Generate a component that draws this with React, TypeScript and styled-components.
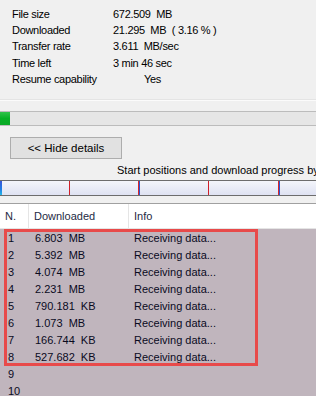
import styled, { createGlobalStyle } from "styled-components";

const GlobalStyle = createGlobalStyle`
  html, body {
    margin: 0;
    padding: 0;
    background: #f0f0f0;
    overflow: hidden;
  }
  body {
    font-family: "Liberation Sans", Arial, sans-serif;
    color: #000;
  }
  *, *::before, *::after {
    box-sizing: border-box;
  }
`;

const info = [
  { label: "File size", value: "672.509  MB" },
  { label: "Downloaded", value: "21.295  MB  ( 3.16 % )" },
  { label: "Transfer rate", value: "3.611  MB/sec" },
  { label: "Time left", value: "3 min 46 sec" },
  { label: "Resume capability", value: "Yes", indent: true },
];

const sections = [
  { n: 1, size: "6.803  MB" },
  { n: 2, size: "5.392  MB" },
  { n: 3, size: "4.074  MB" },
  { n: 4, size: "2.231  MB" },
  { n: 5, size: "790.181  KB" },
  { n: 6, size: "1.073  MB" },
  { n: 7, size: "166.744  KB" },
  { n: 8, size: "527.682  KB" },
];

const markers = [
  { x: 69, blue: false },
  { x: 138, blue: true },
  { x: 208, blue: false },
  { x: 278, blue: true },
];

export default function App() {
  return (
    <Window>
      <GlobalStyle />
      <InfoTable>
        {info.map((r) => (
          <InfoRow key={r.label}>
            <Label>{r.label}</Label>
            <Value $indent={r.indent}>{r.value}</Value>
          </InfoRow>
        ))}
      </InfoTable>
      <Divider />
      <Progress>
        <ProgressFill style={{ width: "3.16%" }} />
      </Progress>
      <Button>&lt;&lt; Hide details</Button>
      <Caption>Start positions and download progress by sections</Caption>
      <SectionBar>
        <StartMark />
        {markers.map((m) => (
          <Marker key={m.x} $blue={m.blue} style={{ left: m.x }} />
        ))}
      </SectionBar>
      <List>
        <Header>
          <HeadCell $w={29}>N.</HeadCell>
          <HeadCell $w={100}>Downloaded</HeadCell>
          <HeadCell $w={190} $last>
            Info
          </HeadCell>
        </Header>
        <Body>
          {sections.map((s) => (
            <Row key={s.n}>
              <NumCell>{s.n}</NumCell>
              <SizeCell>{s.size}</SizeCell>
              <InfoCell>Receiving data...</InfoCell>
            </Row>
          ))}
          <Row>
            <NumCell>9</NumCell>
          </Row>
          <Row>
            <NumCell>10</NumCell>
          </Row>
          <Highlight />
        </Body>
      </List>
    </Window>
  );
}

const Window = styled.div`
  width: 316px;
  height: 396px;
  display: flex;
  flex-direction: column;
  overflow: hidden;
`;

const InfoTable = styled.div`
  display: flex;
  flex-direction: column;
  padding: 6px 0 0 12px;
  height: 88px;
  flex: none;
`;

const InfoRow = styled.div`
  display: flex;
  height: 16.2px;
  align-items: center;
  font-size: 11px;
  letter-spacing: -0.3px;
`;

const Label = styled.span`
  width: 101px;
  white-space: nowrap;
`;

const Value = styled.span<{ $indent?: boolean }>`
  white-space: pre;
  padding-left: ${(p) => (p.$indent ? "31px" : "0")};
`;

const Divider = styled.div`
  height: 2px;
  background: #fbfbfb;
  border-top: 1px solid #e4e4e4;
  margin-top: 11px;
  flex: none;
`;

const Progress = styled.div`
  margin-top: 10px;
  height: 15px;
  background: #e6e6e6;
  border-top: 1px solid #bcbcbc;
  border-bottom: 1px solid #bcbcbc;
  display: flex;
  flex: none;
`;

const ProgressFill = styled.div`
  background: linear-gradient(#2fc34a, #06b025 50%, #0aa926);
`;

const Button = styled.button`
  margin: 11px 0 0 10px;
  width: 112px;
  height: 22px;
  flex: none;
  background: #e1e1e1;
  border: 1px solid #adadad;
  font-family: "Liberation Sans", Arial, sans-serif;
  font-size: 11.5px;
  color: #000;
  padding: 0;
`;

const Caption = styled.div`
  margin: 3px 0 0 117px;
  height: 17px;
  line-height: 17px;
  font-size: 11px;
  white-space: nowrap;
  flex: none;
`;

const SectionBar = styled.div`
  position: relative;
  margin-top: 1px;
  height: 16px;
  flex: none;
  border-top: 1px solid #6d6d6d;
  border-bottom: 1px solid #6d6d6d;
  background: linear-gradient(#f4f5fb, #dfe2f2);
`;

const StartMark = styled.div`
  position: absolute;
  left: 0;
  top: 0;
  width: 2px;
  height: 14px;
  background: linear-gradient(#3a57d8, #1f7fe6 60%, #22b8e8);
`;

const Marker = styled.div<{ $blue: boolean }>`
  position: absolute;
  top: 0;
  width: ${(p) => (p.$blue ? "2px" : "1px")};
  height: 14px;
  background: ${(p) =>
    p.$blue
      ? "linear-gradient(90deg, #d8262a 50%, #2a56d6 50%)"
      : "#d0202a"};
`;

const List = styled.div`
  margin-top: 7px;
  border-top: 1px solid #a0a0a0;
  flex: 1;
  display: flex;
  flex-direction: column;
`;

const Header = styled.div`
  display: flex;
  height: 25px;
  flex: none;
  background: #fff;
  border-bottom: 1px solid #e5e5e5;
`;

const HeadCell = styled.div<{ $w: number; $last?: boolean }>`
  width: ${(p) => p.$w}px;
  flex: none;
  padding-left: 5px;
  line-height: 24px;
  font-size: 11px;
  color: #1e2a44;
  border-right: ${(p) => (p.$last ? "none" : "1px solid #e5e5e5")};
`;

const Body = styled.div`
  position: relative;
  flex: 1;
  background: #c0b5bd;
  padding-top: 1px;
`;

const Highlight = styled.div`
  position: absolute;
  left: 4px;
  top: 0;
  width: 254px;
  height: 137px;
  border: 3px solid #e84a4a;
  pointer-events: none;
`;

const Row = styled.div`
  display: flex;
  height: 17px;
  line-height: 17px;
  font-size: 11px;
  color: #0a0a1e;
  white-space: pre;
`;

const NumCell = styled.div`
  width: 35px;
  padding-left: 8px;
  flex: none;
`;

const SizeCell = styled.div`
  width: 99px;
  flex: none;
`;

const InfoCell = styled.div`
  flex: none;
`;
